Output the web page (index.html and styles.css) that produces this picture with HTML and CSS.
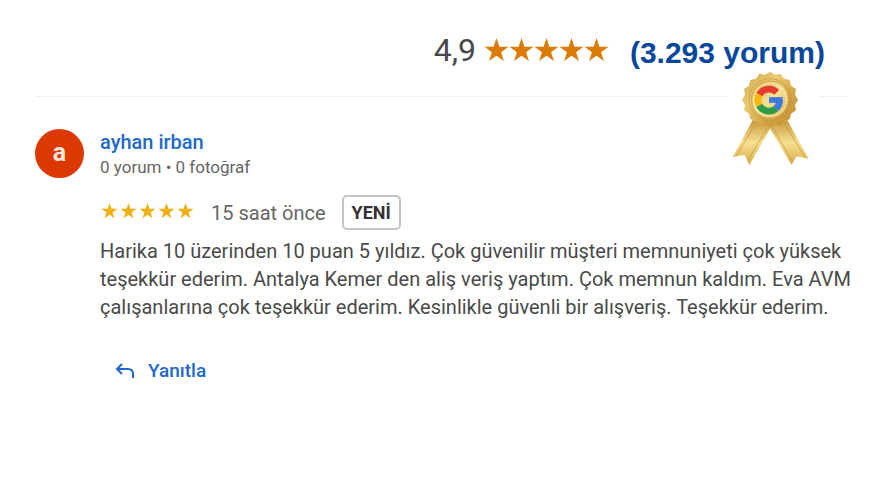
FILE: index.html
```
<!DOCTYPE html>
<html lang="tr">
<head>
    <meta charset="utf-8">
    <meta name="viewport" content="width=device-width, initial-scale=1.0">
    <title>Yorumlar</title>
    <link rel="stylesheet" href="styles.css">
</head>
<body>
    <svg class="defs" width="0" height="0" aria-hidden="true">
        <symbol id="star" viewBox="0 0 24 24">
            <path d="M12 0l2.9 8.8H24l-7.4 5.5L19.4 23 12 17.7 4.6 23l2.8-8.7L0 8.8h9.1z"/>
        </symbol>
    </svg>

    <header class="summary">
        <span class="score">4,9</span>
        <span class="stars stars-large" role="img" aria-label="5 yıldız">
            <svg><use href="#star"/></svg>
            <svg><use href="#star"/></svg>
            <svg><use href="#star"/></svg>
            <svg><use href="#star"/></svg>
            <svg><use href="#star"/></svg>
        </span>
        <span class="total">(3.293 yorum)</span>

        <div class="badge">
            <svg viewBox="0 0 300 330" role="img" aria-label="Google">
                <defs>
                    <linearGradient id="gold" x1="0" y1="0" x2="1" y2="1">
                        <stop offset="0" stop-color="#d2a546"/>
                        <stop offset="0.35" stop-color="#ebcb72"/>
                        <stop offset="0.65" stop-color="#d3a444"/>
                        <stop offset="1" stop-color="#bd8a30"/>
                    </linearGradient>
                    <linearGradient id="face" x1="0" y1="0" x2="1" y2="1">
                        <stop offset="0" stop-color="#d9ab48"/>
                        <stop offset="0.5" stop-color="#f5e29a"/>
                        <stop offset="1" stop-color="#d6a844"/>
                    </linearGradient>
                    <linearGradient id="ribbon" x1="0" y1="0" x2="0" y2="1">
                        <stop offset="0" stop-color="#c9983a"/>
                        <stop offset="0.5" stop-color="#f6df92"/>
                        <stop offset="1" stop-color="#dcae4a"/>
                    </linearGradient>
                </defs>
                <!-- ribbons -->
                <path fill="url(#ribbon)" d="M98 180L38 291l36-6 14 30 72-125z"/>
                <path fill="url(#ribbon)" d="M202 180l64 117-36-8-15 26-75-125z"/>
                <path fill="none" stroke="#c0923c" stroke-width="2" d="M107 190L49 288M142 202L83 303M193 190l61 100M158 202l58 101"/>
                <!-- seal -->
                <g transform="translate(150 119)">
                    <path fill="url(#gold)" d="M0-84L15-75 32-78 42-63 59-59 63-42 78-32 75-15 84 0 75 15 78 32 63 42 59 59 42 63 32 78 15 75 0 84-15 75-32 78-42 63-59 59-63 42-78 32-75 15-84 0-75-15-78-32-63-42-59-59-42-63-32-78-15-75z"/>
                    <circle r="63" fill="none" stroke="#be8f3a" stroke-width="2"/>
                    <circle r="56" fill="url(#face)" stroke="#c39440" stroke-width="2"/>
                    <circle r="49" fill="none" stroke="#f8e9ae" stroke-width="5" stroke-dasharray="5 3"/>
                </g>
                <g transform="translate(147 120)" fill="none" stroke-width="20">
                    <path stroke="#e33b2e" d="M-29-16A33 33 0 0 1 23-23"/>
                    <path stroke="#f9b90a" d="M-29 16A33 33 0 0 1-29-16"/>
                    <path stroke="#2c9c48" d="M21 26A33 33 0 0 1-29 16"/>
                    <path stroke="#3b78e0" d="M31 0A33 33 0 0 1 21 26"/>
                    <path stroke="#3b78e0" stroke-width="17" d="M0 0h41"/>
                </g>
            </svg>
        </div>
    </header>

    <article class="review">
        <div class="avatar">a</div>
        <div class="content">
            <a class="author" href="#">ayhan irban</a>
            <div class="meta">0 yorum • 0 fotoğraf</div>

            <div class="rating">
                <span class="stars stars-small" role="img" aria-label="5 yıldız">
                    <svg><use href="#star"/></svg>
                    <svg><use href="#star"/></svg>
                    <svg><use href="#star"/></svg>
                    <svg><use href="#star"/></svg>
                    <svg><use href="#star"/></svg>
                </span>
                <span class="time">15 saat önce</span>
                <span class="new">YENİ</span>
            </div>

            <p class="text">Harika 10 üzerinden 10 puan 5 yıldız. Çok güvenilir müşteri memnuniyeti çok yüksek teşekkür ederim. Antalya Kemer den aliş veriş yaptım. Çok memnun kaldım. Eva AVM çalışanlarına çok teşekkür ederim. Kesinlikle güvenli bir alışveriş. Teşekkür ederim.</p>

            <button class="reply" type="button">
                <svg viewBox="0 0 20 16" aria-hidden="true">
                    <path d="M7 1L2 6l5 5M2 6h11q5 0 5 5v4"/>
                </svg>
                Yanıtla
            </button>
        </div>
    </article>
</body>
</html>
```

FILE: styles.css
```
* {
    box-sizing: border-box;
}

body {
    font-family: Roboto, "Liberation Sans", sans-serif;
    background-color: #fff;
    color: #4a4a4a;
    margin: 0;
    padding: 0 24px 0 35px;
}

.defs {
    position: absolute;
}

.summary {
    position: relative;
    display: flex;
    align-items: center;
    justify-content: flex-end;
    height: 97px;
    margin-right: 10px;
    padding: 4px 21px 0 0;
    border-bottom: 1px solid #f1f1f1;
}

.score {
    font-size: 32px;
    line-height: 40px;
    color: #48484a;
    margin-right: 8px;
}

.stars {
    display: flex;
}

.stars-large {
    margin-right: 21px;
    fill: #dc7c08;
}

.stars-large svg {
    width: 25px;
    height: 24px;
}

.total {
    font-family: "Liberation Sans", Arial, sans-serif;
    font-size: 30px;
    font-weight: bold;
    line-height: 40px;
    padding-top: 6px;
    color: #07489c;
}

/* sits over the divider and hides a part of it */
.badge {
    position: absolute;
    top: 60px;
    right: 26px;
    padding: 0 4px;
    width: 92px;
    background-color: #fff;
    clip-path: inset(10px 0 0 0);
}

.badge svg {
    display: block;
    width: 100px;
    height: 110px;
    margin-left: -12px;
}

.review {
    display: flex;
    gap: 16px;
    padding-top: 32px;
}

.avatar {
    flex: none;
    width: 49px;
    height: 49px;
    border-radius: 50%;
    background-color: #dc3802;
    color: #fbe5dc;
    font-size: 25px;
    font-weight: bold;
    line-height: 47px;
    text-align: center;
}

.content {
    flex: 1;
}

.author {
    display: block;
    color: #2169c9;
    font-size: 20px;
    font-weight: 500;
    line-height: 26px;
    text-decoration: none;
}

.meta {
    font-size: 17px;
    line-height: 24px;
    color: #666;
}

.rating {
    display: flex;
    align-items: center;
    gap: 16px;
    margin-top: 16px;
}

.stars-small {
    gap: 2px;
    padding: 0 1px;
    margin-top: -4px;
    fill: #f0b010;
}

.stars-small svg {
    width: 17px;
    height: 16px;
}

.time {
    font-size: 20px;
    line-height: 28px;
    color: #666;
}

.new {
    padding: 0 8px;
    border: 2px solid #c4c4c4;
    border-radius: 5px;
    color: #333;
    font-size: 18px;
    font-weight: bold;
    line-height: 31px;
}

.text {
    margin: 7px 0 36px;
    font-size: 20px;
    line-height: 28px;
}

.reply {
    display: flex;
    align-items: center;
    gap: 13px;
    padding: 0 15px;
    border: none;
    background: none;
    color: #2169c9;
    font-family: inherit;
    font-size: 19px;
    font-weight: 500;
    line-height: 28px;
    cursor: pointer;
}

.reply svg {
    width: 20px;
    height: 16px;
    fill: none;
    stroke: #2169c9;
    stroke-width: 2;
}
```
